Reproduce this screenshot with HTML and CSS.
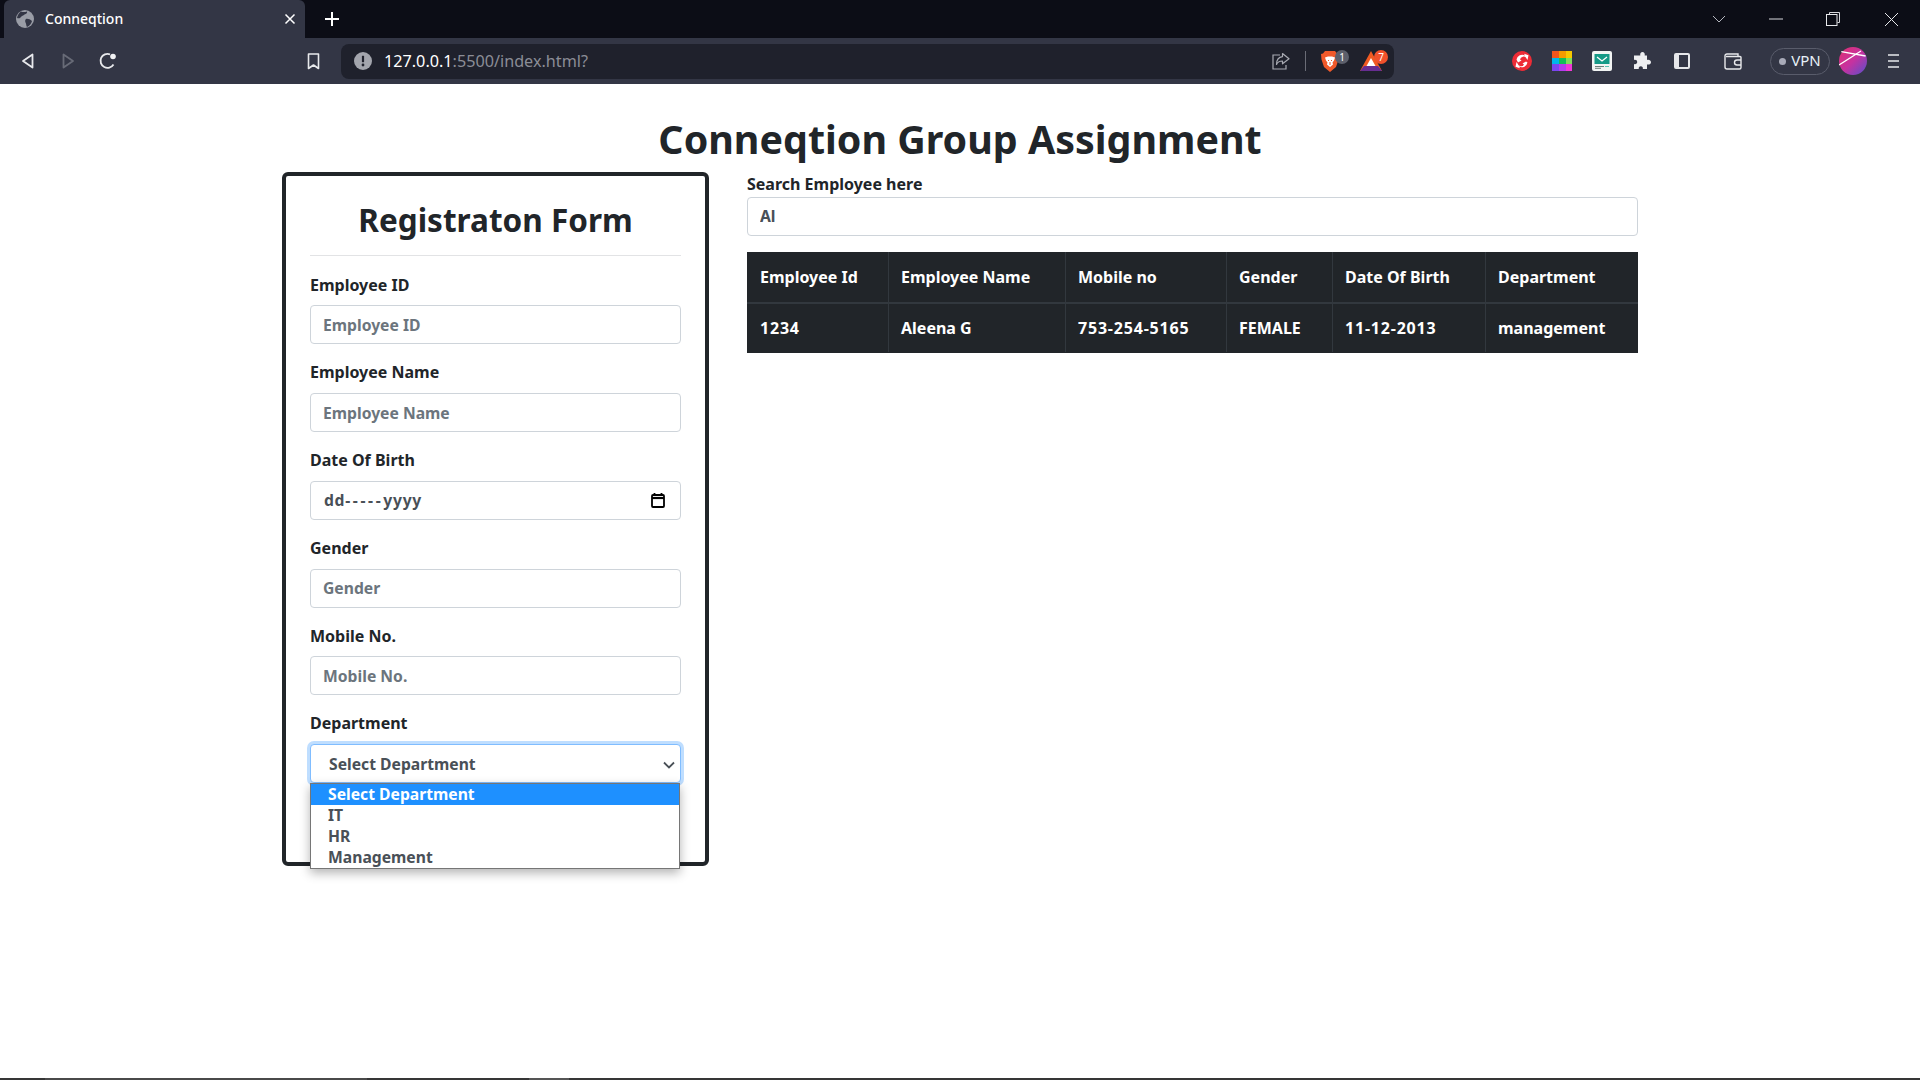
FILE: index.html
```html
<!DOCTYPE html>
<html lang="en">
<head>
    <meta charset="UTF-8">
    <meta name="viewport" content="width=device-width, initial-scale=1.0">
    <title>Conneqtion</title>
    <link rel="stylesheet" href="styles.css">
</head>
<body>

    <!-- browser chrome -->
    <div class="tab-strip">
        <div class="tab">
            <svg class="tab-globe" width="18" height="18" viewBox="0 0 18 18"><circle cx="9" cy="9" r="9" fill="#9a9da6"/><path d="M5 1.500c2 1 4 .5 6 0 .5 1.500-1 2.500-2.500 3-1 1.500-3 1-4 3-1 1-2.500 1-3.500.5C1.500 5 3 3 5 1.500zM10 9c2-.5 4 .5 6 2-.5 2.500-2.500 5-5 6-1-1-.5-3-1.500-4.500C9 11 9 10 10 9z" fill="#333645"/></svg>
            <span class="tab-title">Conneqtion</span>
            <svg class="tab-close" width="12" height="12" viewBox="0 0 12 12"><path d="M1.500 1.500l9 9M10.500 1.500l-9 9" stroke="#fff" stroke-width="1.500"/></svg>
        </div>
        <svg class="tab-new" width="16" height="16" viewBox="0 0 16 16"><path d="M8 1v14M1 8h14" stroke="#fff" stroke-width="2"/></svg>
        <div class="window-controls">
            <svg class="win-chevron" width="14" height="8" viewBox="0 0 14 8"><path d="M1 1l6 6 6-6" fill="none" stroke="#b5b7bf" stroke-width="1"/></svg>
            <svg class="win-min" width="14" height="2" viewBox="0 0 14 2"><path d="M0 1h14" stroke="#d8d9dd" stroke-width="1"/></svg>
            <svg class="win-restore" width="14" height="14" viewBox="0 0 14 14"><path d="M3.500 2.500V.5h10v10h-2" fill="none" stroke="#d8d9dd"/><rect x=".5" y="2.500" width="10.500" height="11" fill="none" stroke="#e8e9ec"/></svg>
            <svg class="win-close" width="15" height="15" viewBox="0 0 15 15"><path d="M1 1l13 13M14 1L1 14" stroke="#e8e9ec" stroke-width="1"/></svg>
        </div>
    </div>

    <div class="toolbar">
        <span class="tool-btn"><svg width="14" height="16" viewBox="0 0 14 16"><path d="M11.500 1.500v13L2 8z" fill="none" stroke="#e8e9ec" stroke-width="1.800" stroke-linejoin="round"/></svg></span>
        <span class="tool-btn"><svg width="14" height="16" viewBox="0 0 14 16"><path d="M2.500 1.500v13L12 8z" fill="none" stroke="#686b77" stroke-width="1.800" stroke-linejoin="round"/></svg></span>
        <span class="tool-btn"><svg width="18" height="18" viewBox="0 0 18 18"><path d="M14.500 12.500A7 7 0 1 1 11 2.300" fill="none" stroke="#e8e9ec" stroke-width="1.800"/><circle cx="14" cy="4.500" r="2.800" fill="#f2f2f4"/></svg></span>
        <span class="tool-btn bookmark-btn"><svg width="13" height="17" viewBox="0 0 13 17"><path d="M1.500 1h10v14.500l-5-3.500-5 3.500z" fill="none" stroke="#e8e9ec" stroke-width="1.600" stroke-linejoin="round"/></svg></span>

        <div class="address-bar">
            <svg class="addr-alert" width="18" height="18" viewBox="0 0 18 18"><circle cx="9" cy="9" r="9" fill="#a3a5ad"/><path d="M9 3.800v6.400" stroke="#1f212c" stroke-width="2.200"/><circle cx="9" cy="13" r="1.400" fill="#1f212c"/></svg>
            <span class="addr-url"><span class="addr-host">127.0.0.1</span>:5500/index.html?</span>
            <svg class="addr-share" width="18" height="18" viewBox="0 0 18 18"><path d="M10.500 1.500L17 6.800l-6.500 5V9C7.500 9 5.500 10 4.500 12.500 4.500 8 7 5 10.500 4.600z" fill="none" stroke="#a8aab2" stroke-width="1.200" stroke-linejoin="round"/><path d="M8 3H1v14h13v-4" fill="none" stroke="#a8aab2" stroke-width="1.200"/></svg>
            <span class="addr-sep"></span>
            <span class="addr-shield">
                <svg width="18" height="21" viewBox="0 0 18 21"><path d="M4 0h10l2 2.500 2 .5-.5 5.500L15 16l-6 5-6-5L.5 8.500 0 3l2-.5z" fill="#f1592a"/><path d="M4 6.500l3-1h4l3 1-1 3-1.500 2 .5 2L9 16l-3-2.500.5-2L5 9.500z" fill="#fff"/><path d="M7 9l1 1M11 9l-1 1M9 11v3" stroke="#f1592a" stroke-width="1"/></svg>
                <span class="addr-badge badge-grey">1</span>
            </span>
            <span class="addr-bat">
                <svg width="22" height="20" viewBox="0 0 22 20"><path d="M11 0l11 20H0z" fill="#f15a22"/><path d="M0 20l4-5h14l4 5z" fill="#662d91"/><path d="M11 7l4.500 8h-9z" fill="#fff"/></svg>
                <span class="addr-badge badge-red">7</span>
            </span>
        </div>

        <span class="tool-btn ext-first"><svg width="20" height="20" viewBox="0 0 20 20"><circle cx="10" cy="10" r="10" fill="#ee2c36"/><path d="M4.500 8.500A5.800 5.800 0 0 1 13 4.500L12 2.800l4.500 1.500-1 4.700-1-1.600A3.500 3.500 0 0 0 8 8.500l1.500 1L6 11.500zM15.500 11.500A5.800 5.800 0 0 1 7 15.500l1 1.700-4.500-1.500 1-4.700 1 1.600a3.500 3.500 0 0 0 6.500.9l-1.500-1 3.500-2z" fill="#fff"/></svg></span>
        <span class="tool-btn"><svg width="20" height="20" viewBox="0 0 20 20"><rect width="7" height="7" fill="#f0561c"/><rect x="7" width="7" height="7" fill="#f59b00"/><rect x="14" width="6" height="7" fill="#f7c800"/><rect y="7" width="7" height="6" fill="#00b7ea"/><rect x="7" y="7" width="7" height="6" fill="#12c05a"/><rect x="14" y="7" width="6" height="6" fill="#7fe05c"/><rect y="13" width="7" height="7" fill="#7a45f0"/><rect x="7" y="13" width="7" height="7" fill="#b53cee"/><rect x="14" y="13" width="6" height="7" fill="#f238d8"/></svg></span>
        <span class="tool-btn"><svg width="20" height="20" viewBox="0 0 20 20"><rect width="20" height="20" rx="2" fill="#f2f4f3"/><rect x="2.500" y="3" width="15" height="10" fill="#159a87"/><path d="M5 6l5 4 5-4" fill="none" stroke="#fff" stroke-width="1.300"/><path d="M3 15.500h9M3 17.300h6" stroke="#6d7f7b" stroke-width="1"/><path d="M13 15.500h4" stroke="#5cc4b4" stroke-width="1"/></svg></span>
        <span class="tool-btn"><svg width="18" height="18" viewBox="0 0 18 18"><path d="M5 3.500h2.300C6.800 1.500 8 0 9.500 0s2.700 1.500 2.200 3.500H14V8c2-.7 4 .4 4 2.200S16 13 14 12.400V17H9.800c.5-1.700-.6-2.800-2-2.800s-2.500 1.100-2 2.800H1v-5c1.700.6 3.200-.4 3.200-2S2.700 7.400 1 8V3.500z" fill="#eeeff1"/></svg></span>
        <span class="tool-btn"><svg width="16" height="16" viewBox="0 0 16 16"><rect x="1" y="1" width="14" height="14" rx="1" fill="none" stroke="#e6e7ea" stroke-width="2"/><path d="M3.500 1v14" stroke="#e6e7ea" stroke-width="3"/></svg></span>
        <span class="tool-btn wallet-btn"><svg width="18" height="17" viewBox="0 0 18 17"><path d="M14 3.500V1H3a2 2 0 0 0-2 2v11a2 2 0 0 0 2 2h12.500a1.500 1.500 0 0 0 1.500-1.500v-10a1 1 0 0 0-1-1H2" fill="none" stroke="#e8e9ec" stroke-width="1.400"/><path d="M17 7h-4a2.500 2.500 0 0 0 0 5h4" fill="none" stroke="#e8e9ec" stroke-width="1.400"/></svg></span>
        <span class="vpn-pill"><span class="vpn-dot"></span><span class="vpn-text">VPN</span></span>
        <span class="tool-btn avatar-btn"><svg width="28" height="28" viewBox="0 0 28 28"><defs><linearGradient id="avatarFill" x1="0" y1="0" x2="1" y2="1"><stop offset="0" stop-color="#e0306e"/><stop offset=".5" stop-color="#c632a0"/><stop offset="1" stop-color="#5550cc"/></linearGradient></defs><circle cx="14" cy="14" r="14" fill="url(#avatarFill)"/><path d="M2.300 4.600L26.600 9M22 4L0 18" stroke="#fff" stroke-width="1.300"/></svg></span>
        <span class="tool-btn"><svg width="13" height="14" viewBox="0 0 13 14"><path d="M1 1h11M1 7h11M1 13h11" stroke="#e8e9ec" stroke-width="1.600"/></svg></span>
    </div>

    <!-- page -->
    <div class="page">
        <h1 class="page-title">Conneqtion Group Assignment</h1>

        <div class="columns">
            <form class="reg-card">
                <h2 class="reg-title">Registraton Form</h2>
                <hr class="reg-rule">

                <div class="form-group">
                    <label class="form-label">Employee ID</label>
                    <input class="form-control" type="text" placeholder="Employee ID">
                </div>
                <div class="form-group">
                    <label class="form-label">Employee Name</label>
                    <input class="form-control" type="text" placeholder="Employee Name">
                </div>
                <div class="form-group">
                    <label class="form-label">Date Of Birth</label>
                    <div class="form-control date-control">
                        <span class="date-text">dd<span class="date-dashes">-----</span>yyyy</span>
                        <svg width="14" height="15" viewBox="0 0 14 15"><path d="M3.500 0v3M10.500 0v3" stroke="#000" stroke-width="1.800"/><rect x="1" y="2" width="12" height="12" rx="1" fill="none" stroke="#000" stroke-width="1.800"/><path d="M1 5h12" stroke="#000" stroke-width="2.200"/></svg>
                    </div>
                </div>
                <div class="form-group">
                    <label class="form-label">Gender</label>
                    <input class="form-control" type="text" placeholder="Gender">
                </div>
                <div class="form-group">
                    <label class="form-label">Mobile No.</label>
                    <input class="form-control" type="text" placeholder="Mobile No.">
                </div>
                <div class="form-group select-group">
                    <label class="form-label">Department</label>
                    <div class="form-control select-control">
                        <span>Select Department</span>
                        <svg width="12" height="8" viewBox="0 0 12 8"><path d="M1 1.500l5 5 5-5" fill="none" stroke="#495057" stroke-width="1.800"/></svg>
                    </div>
                    <ul class="select-menu">
                        <li class="selected">Select Department</li>
                        <li>IT</li>
                        <li>HR</li>
                        <li>Management</li>
                    </ul>
                </div>
            </form>

            <div class="results">
                <label class="form-label search-label">Search Employee here</label>
                <input class="form-control" type="text" value="Al">

                <table class="emp-table">
                    <colgroup>
                        <col class="col-id"><col class="col-name"><col class="col-mobile">
                        <col class="col-gender"><col class="col-dob"><col class="col-dept">
                    </colgroup>
                    <thead>
                        <tr>
                            <th>Employee Id</th>
                            <th>Employee Name</th>
                            <th>Mobile no</th>
                            <th>Gender</th>
                            <th>Date Of Birth</th>
                            <th>Department</th>
                        </tr>
                    </thead>
                    <tbody>
                        <tr>
                            <td class="num">1234</td>
                            <td>Aleena G</td>
                            <td class="num">753-254-5165</td>
                            <td>FEMALE</td>
                            <td class="num">11-12-2013</td>
                            <td>management</td>
                        </tr>
                    </tbody>
                </table>
            </div>
        </div>
    </div>

    <div class="bottom-edge">
        <span class="edge-a"></span>
        <span class="edge-b"></span>
    </div>

</body>
</html>
```

FILE: styles.css
```css
* {
    box-sizing: border-box;
}

body {
    margin: 0;
    height: 100vh;
    overflow: hidden;
    display: flex;
    flex-direction: column;
    background-color: #fff;
    color: #212529;
    font-family: "Noto Sans", sans-serif;
    font-size: 16px;
}

/* browser chrome */
.tab-strip {
    height: 38px;
    background-color: #0c0d16;
    display: flex;
    align-items: center;
    padding-left: 4px;
}

.tab {
    width: 301px;
    height: 38px;
    background-color: #333645;
    border-radius: 6px 6px 0 0;
    display: flex;
    align-items: center;
    padding: 0 9px 0 12px;
}

.tab-title {
    margin: -2px 0 0 11px;
    color: #fff;
    font-size: 14px;
    font-weight: 500;
    flex: 1;
}

.tab-new {
    margin-left: 19px;
}

.window-controls {
    margin-left: auto;
    display: flex;
    align-items: center;
}

.win-min {
    margin-left: 43px;
}

.win-restore {
    margin-left: 43px;
}

.win-close {
    margin-left: 44px;
    margin-right: 21px;
}

.toolbar {
    height: 46px;
    background-color: #333645;
    display: flex;
    align-items: center;
    padding-left: 8px;
}

.tool-btn {
    width: 40px;
    height: 40px;
    flex: none;
    display: flex;
    align-items: center;
    justify-content: center;
}

.bookmark-btn {
    margin-left: 165px;
}

.address-bar {
    width: 1053px;
    height: 35px;
    margin-left: 8px;
    background-color: #1f212c;
    border-radius: 8px;
    display: flex;
    align-items: center;
    padding-left: 13px;
}

.addr-url {
    margin-left: 12px;
    flex: 1;
    color: #8b8d96;
    font-size: 16.2px;
}

.addr-host {
    color: #fff;
}

.addr-sep {
    width: 1px;
    height: 20px;
    margin: 0 15px;
    background-color: #6a6c76;
}

.addr-shield,
.addr-bat {
    position: relative;
    display: flex;
}

.addr-bat {
    margin-left: 21px;
    margin-right: 12px;
}

.addr-badge {
    position: absolute;
    top: -1px;
    left: 14px;
    width: 14px;
    height: 14px;
    border-radius: 50%;
    color: #fff;
    font-size: 10px;
    line-height: 14px;
    text-align: center;
}

.badge-grey {
    background-color: #5c5f6b;
}

.badge-red {
    background-color: #f0512b;
}

.ext-first {
    margin-left: 108px;
}

.wallet-btn {
    margin-left: 11px;
}

.vpn-pill {
    width: 60px;
    height: 27px;
    margin-left: 17px;
    flex: none;
    border: 1.5px solid #595c6b;
    border-radius: 14px;
    display: flex;
    align-items: center;
    justify-content: center;
    gap: 5px;
    color: #e8f1f8;
    font-size: 15px;
}

.vpn-text {
    margin-top: -2px;
}

.vpn-dot {
    width: 7px;
    height: 7px;
    border-radius: 50%;
    background-color: #a8aab8;
}

.avatar-btn {
    margin-left: 3px;
}

/* page */
.page {
    flex: 1;
    width: 1356px;
    margin: 0 auto;
    padding-top: 31px;
}

.page-title {
    margin: 0 0 9px;
    font-size: 39.4px;
    line-height: 48px;
    font-weight: 700;
    text-align: center;
}

.columns {
    display: flex;
    gap: 38px;
    align-items: flex-start;
}

.reg-card {
    width: 427px;
    height: 694px;
    flex: none;
    border: 4px solid #212529;
    border-radius: 6px;
    padding: 25px 24px 0;
}

.reg-title {
    margin: 0;
    font-size: 31.5px;
    line-height: 38.4px;
    font-weight: 700;
    text-align: center;
}

.reg-rule {
    margin: 15.5px 0 16.8px;
    border: 0;
    border-top: 1px solid #e2e3e5;
}

.form-group {
    margin-bottom: 16px;
}

.form-label {
    display: block;
    margin-bottom: 8px;
    line-height: 24.75px;
    font-size: 16px;
    font-weight: 700;
}

.form-control {
    display: block;
    width: 100%;
    height: 39px;
    padding: 6px 12px;
    border: 1px solid #ced4da;
    border-radius: 4px;
    background-color: #fff;
    color: #495057;
    font-family: inherit;
    font-size: 15.7px;
    font-weight: 700;
    line-height: 25px;
}

.form-control::placeholder {
    color: #6c757d;
    opacity: 1;
}

.date-control,
.select-control {
    display: flex;
    align-items: center;
    justify-content: space-between;
}

.date-control {
    padding: 6px 15px 6px 13px;
}

.date-text {
    letter-spacing: 0.7px;
}

.date-dashes {
    letter-spacing: 2.6px;
}

.select-group {
    position: relative;
}

.select-control {
    padding: 8px 5px 6px 18px;
    border-color: #80bdff;
    box-shadow: 0 0 0 3px rgba(128, 189, 255, 0.5);
}

.select-menu {
    position: absolute;
    top: 72px;
    left: 0;
    width: 370px;
    margin: 0;
    padding: 0;
    list-style: none;
    background-color: #fff;
    border: 1px solid #767676;
    box-shadow: 0 4px 10px rgba(0, 0, 0, 0.3);
    color: #495057;
    font-size: 15.7px;
    font-weight: 700;
    line-height: 21px;
}

.select-menu li {
    height: 21px;
    padding-left: 17px;
}

.select-menu .selected {
    background-color: #1e90ff;
    color: #fff;
}

.results {
    width: 891px;
    flex: none;
}

.search-label {
    margin-bottom: 0;
}

.emp-table {
    width: 890px;
    margin-top: 16px;
    border-collapse: collapse;
    table-layout: fixed;
    background-color: #212529;
    color: #fff;
    font-size: 16px;
    font-weight: 700;
}

.col-id { width: 141px; }
.col-name { width: 177px; }
.col-mobile { width: 161px; }
.col-gender { width: 106px; }
.col-dob { width: 153px; }
.col-dept { width: 152px; }

.emp-table th,
.emp-table td {
    padding: 0 12px;
    text-align: left;
    font-weight: 700;
    white-space: nowrap;
    border: 1px solid #32383e;
}

.emp-table th {
    height: 50.5px;
}

.emp-table td {
    height: 49.5px;
}

.emp-table .num {
    letter-spacing: 0.8px;
}

.emp-table tr > :first-child {
    border-left-color: #212529;
}

.emp-table tr > :last-child {
    border-right-color: #212529;
}

.emp-table thead th {
    border-top-color: #212529;
    border-bottom-width: 2px;
}

.emp-table tbody td {
    border-bottom-color: #212529;
}

.bottom-edge {
    height: 2px;
    flex: none;
    background-color: #363636;
    display: flex;
}

.edge-a {
    width: 322px;
    margin-left: 45px;
    background-color: #4a4a4a;
}

.edge-b {
    width: 40px;
    margin-left: 162px;
    background-color: #555;
}
```
